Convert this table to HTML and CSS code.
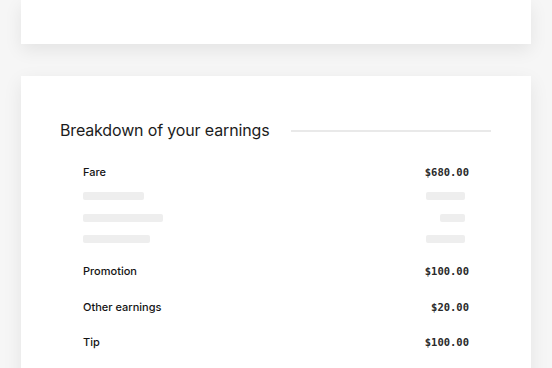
FILE: index.html
```html
<!DOCTYPE html>
<html lang="en">
<head>
<meta charset="utf-8">
<title>Earnings</title>
<link rel="stylesheet" href="styles.css">
</head>
<body>
  <div class="card card-top"></div>
  <section class="card card-main">
    <div class="title-row">
      <h2 class="title">Breakdown of your earnings</h2>
      <div class="rule"></div>
    </div>
    <div class="rows">
      <div class="row"><span class="label">Fare</span><span class="amount">$680.00</span></div>
      <div class="skeletons">
        <div class="sk-row"><span class="sk" style="width:61px"></span><span class="sk" style="width:39px"></span></div>
        <div class="sk-row"><span class="sk" style="width:80px"></span><span class="sk" style="width:25px"></span></div>
        <div class="sk-row"><span class="sk" style="width:67px"></span><span class="sk" style="width:39px"></span></div>
      </div>
      <div class="group">
        <div class="row"><span class="label">Promotion</span><span class="amount">$100.00</span></div>
        <div class="row"><span class="label">Other earnings</span><span class="amount">$20.00</span></div>
        <div class="row"><span class="label">Tip</span><span class="amount">$100.00</span></div>
      </div>
    </div>
  </section>
</body>
</html>
```

FILE: styles.css
```css
html, body {
  margin: 0;
  padding: 0;
}
body {
  background: #f6f6f6;
  padding: 0 21px;
  height: 368px;
  overflow: hidden;
  font-family: Inter, "Liberation Sans", sans-serif;
  color: #1f1f1f;
}
.card {
  background: #ffffff;
  box-shadow: 0 6px 18px rgba(0, 0, 0, 0.08);
}
.card-top {
  height: 44px;
}
.card-main {
  margin-top: 32px;
  padding: 44px 40px 40px 39px;
}
.title-row {
  display: flex;
  align-items: center;
  justify-content: space-between;
  height: 20px;
}
.title {
  margin: 0;
  font-size: 16px;
  font-weight: 400;
  line-height: 20px;
  letter-spacing: -0.15px;
  color: #1c1c1c;
}
.rule {
  width: 200px;
  height: 2px;
  background: #e9e9e9;
  margin-top: 2px;
}
.rows {
  padding: 0 22px 0 23px;
  margin-top: 22px;
}
.row {
  display: flex;
  justify-content: space-between;
  align-items: center;
  height: 20px;
}
.label {
  font-size: 11px;
  font-weight: 500;
  color: #141414;
}
.amount {
  font-family: "DejaVu Sans Mono", "Liberation Mono", monospace;
  font-size: 10.5px;
  font-weight: 700;
  color: #2a2a2a;
}
.skeletons {
  display: flex;
  flex-direction: column;
  gap: 13.5px;
  margin-top: 10px;
  padding-right: 4px;
}
.sk-row {
  display: flex;
  justify-content: space-between;
}
.sk {
  display: block;
  height: 8px;
  border-radius: 2px;
  background: #eeeeee;
}
.group {
  display: flex;
  flex-direction: column;
  gap: 15.5px;
  margin-top: 18px;
}
```
